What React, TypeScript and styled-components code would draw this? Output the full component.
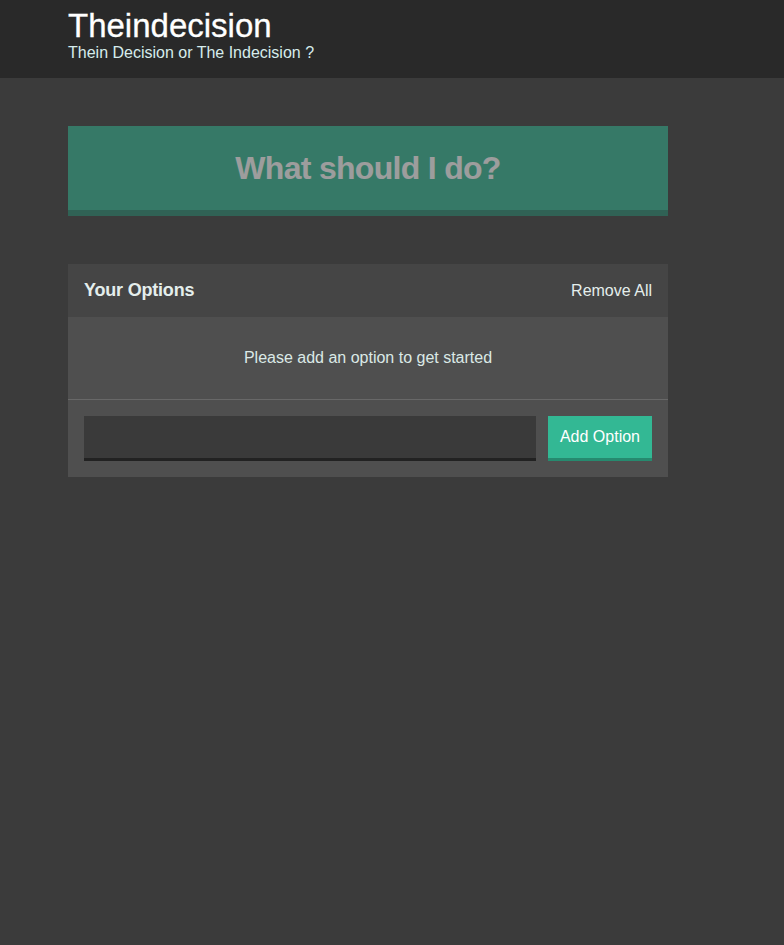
import React from 'react';
import styled, { createGlobalStyle } from 'styled-components';

const GlobalStyle = createGlobalStyle`
  html, body {
    margin: 0;
    padding: 0;
    background: #3b3b3b;
    min-height: 100%;
  }
  body {
    font-family: "Liberation Sans", Arial, Helvetica, sans-serif;
    color: #ffffff;
    min-height: 945px;
  }
  * { box-sizing: border-box; }
`;

const Container = styled.div`
  max-width: 600px;
  margin-left: 68px;
`;

const Header = styled.header`
  background: #292929;
  height: 78px;
  padding-top: 8px;
`;

const Title = styled.h1`
  margin: 0;
  font-size: 33px;
  line-height: 36px;
  font-weight: 400;
  color: #ffffff;
  -webkit-text-stroke: 0.3px #ffffff;
`;

const Subtitle = styled.h2`
  margin: 0;
  font-size: 16px;
  line-height: 18px;
  font-weight: 400;
  color: #d6ecec;
`;

const BigButton = styled.button`
  display: block;
  width: 100%;
  margin: 48px 0;
  padding: 24px;
  border: none;
  border-bottom: 6px solid #268a6f;
  background: #33b894;
  color: #ffffff;
  font-family: inherit;
  font-size: 32px;
  font-weight: 700;
  line-height: 36px;
  letter-spacing: -0.7px;
  opacity: ${p => (p.disabled ? 0.5 : 1)};
`;

const Widget = styled.div`
  background: #4f4f4f;
`;

const WidgetHeader = styled.div`
  display: flex;
  justify-content: space-between;
  align-items: center;
  background: #454545;
  padding: 16px;
`;

const WidgetTitle = styled.h3`
  margin: 0;
  font-size: 18px;
  line-height: 21px;
  font-weight: 700;
  color: #e4eeec;
  letter-spacing: -0.2px;
`;

const LinkButton = styled.button`
  background: none;
  border: none;
  padding: 0;
  font-family: inherit;
  font-size: 16px;
  color: #e4eeec;
`;

const Message = styled.p`
  margin: 0;
  padding: 32px;
  text-align: center;
  font-size: 16px;
  line-height: 18px;
  color: #dbe9e6;
  border-bottom: 1px solid #686868;
`;

const Form = styled.form`
  display: flex;
  padding: 16px;
`;

const Input = styled.input`
  flex: 1;
  height: 45px;
  margin-right: 12px;
  background: #3a3a3a;
  border: none;
  border-bottom: 3px solid #222222;
  color: #ffffff;
  font-family: inherit;
  font-size: 16px;
  padding: 0 12px;
  outline: none;
`;

const Button = styled.button`
  height: 45px;
  padding: 0 12px;
  background: #33b894;
  border: none;
  border-bottom: 3px solid #268a6f;
  color: #ffffff;
  font-family: inherit;
  font-size: 16px;
`;

const App = () => (
  <>
    <GlobalStyle />
    <Header>
      <Container>
        <Title>Theindecision</Title>
        <Subtitle>Thein Decision or The Indecision ?</Subtitle>
      </Container>
    </Header>
    <Container>
      <BigButton disabled>What should I do?</BigButton>
      <Widget>
        <WidgetHeader>
          <WidgetTitle>Your Options</WidgetTitle>
          <LinkButton>Remove All</LinkButton>
        </WidgetHeader>
        <Message>Please add an option to get started</Message>
        <Form onSubmit={e => e.preventDefault()}>
          <Input type="text" name="option" />
          <Button>Add Option</Button>
        </Form>
      </Widget>
    </Container>
  </>
);

export default App;
